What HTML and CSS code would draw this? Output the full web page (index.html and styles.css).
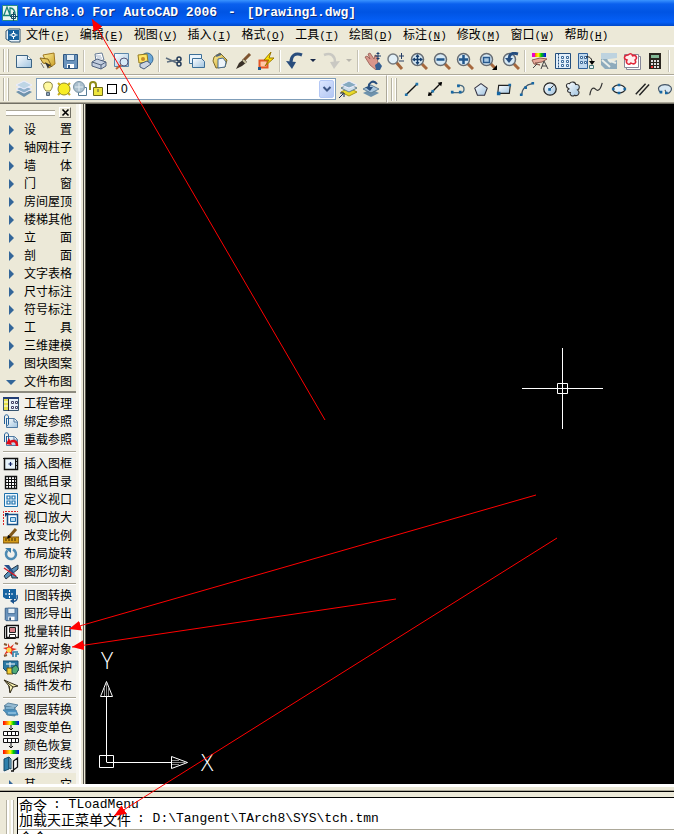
FILE: index.html
```html
<!DOCTYPE html>
<html lang="zh-CN">
<head>
<meta charset="utf-8">
<title>TArch8.0 For AutoCAD 2006 - [Drawing1.dwg]</title>
<link rel="stylesheet" href="styles.css">
</head>
<body>
<svg class="sprite" aria-hidden="true">
  <defs>
    <linearGradient id="paper" x1="0" y1="0" x2="1" y2="1"><stop offset="0" stop-color="#fff"/><stop offset="1" stop-color="#9fc3df"/></linearGradient>
    <linearGradient id="gold" x1="0" y1="0" x2="1" y2="1"><stop offset="0" stop-color="#fff3a0"/><stop offset="1" stop-color="#c89a20"/></linearGradient>
    <linearGradient id="rainbow"><stop offset="0" stop-color="#f00"/><stop offset=".25" stop-color="#f80"/><stop offset=".45" stop-color="#ff0"/><stop offset=".65" stop-color="#0c0"/><stop offset="1" stop-color="#00f"/></linearGradient>
  </defs>

  <symbol id="new" viewBox="0 0 18 18"><path d="M1.500 3.500h11l4 4v8h-15z" fill="url(#paper)" stroke="#3c6484"/><path d="M12.500 3.500v4h4" fill="#fff" stroke="#3c6484"/></symbol>
  <symbol id="open" viewBox="0 0 18 18"><path d="M5 3l11-2 1 11-6 4z" fill="url(#gold)" stroke="#a07820"/><path d="M2 6l8 1 3 6-8-2z" fill="#e8c860" stroke="#8a6818"/><path d="M7 10l3 7 1-3 4 1z" fill="#333"/><path d="M3 11l3 5" stroke="#777"/></symbol>
  <symbol id="save" viewBox="0 0 18 18"><path d="M2.500 2.500h14v14h-13l-1-1z" fill="#6b94bd" stroke="#2f5680"/><path d="M5.500 2.500h8v6h-8z" fill="#e4eef6" stroke="#456f98"/><path d="M6 12h7v4H6z" fill="#fff"/><path d="M7 13h2v3H7z" fill="#2f5680"/></symbol>
  <symbol id="print" viewBox="0 0 18 18"><path d="M5 2l7-1 2 7-8 1z" fill="#fff" stroke="#667b95"/><path d="M2 10l5-3 9 3v4l-5 3-9-3z" fill="#c3cede" stroke="#4f607d"/><path d="M2 10l9 3 5-3M11 13v4" fill="none" stroke="#4f607d"/><path d="M6 4h5M7 6h5" stroke="#a6b5c8"/></symbol>
  <symbol id="preview" viewBox="0 0 18 18"><path d="M1.500 1.500h14v13h-14z" fill="url(#paper)" stroke="#5b87aa"/><circle cx="11" cy="10" r="4" fill="#d6eaf6" stroke="#557"/><path d="M8 13l-5 4" stroke="#bd683c" stroke-width="2"/></symbol>
  <symbol id="publish" viewBox="0 0 18 18"><circle cx="11" cy="7" r="6" fill="#6ba7d8" stroke="#366b98"/><path d="M2 3l9-1 1 8-9 1z" fill="#ffe565" stroke="#947b20"/><path d="M4 12l7-3 4 3-7 5-4-2z" fill="#cbd4e2" stroke="#475c7b"/><circle cx="7" cy="7" r="2" fill="#c68c2b"/></symbol>
  <symbol id="cut" viewBox="0 0 18 18"><path d="M1 6l11 5M2 10l10-2" stroke="#607080" stroke-width="1.500"/><circle cx="14" cy="7" r="2" fill="none" stroke="#243b58" stroke-width="1.500"/><circle cx="14" cy="12" r="2" fill="none" stroke="#243b58" stroke-width="1.500"/></symbol>
  <symbol id="copy" viewBox="0 0 18 18"><path d="M1.500 2.500h12v9h-12z" fill="#eaf4fb" stroke="#3c6f98"/><path d="M4.500 6.500h9l3 3v6h-12z" fill="url(#paper)" stroke="#3c6f98"/></symbol>
  <symbol id="paste" viewBox="0 0 18 18"><path d="M3 5l6-4 7 7-2 7-9 1-3-7z" fill="url(#gold)" stroke="#7c6a28"/><path d="M7 7l5-1 3 4-1 5-7 1z" fill="#eef5fa" stroke="#496e90"/><path d="M5 4l5-2" stroke="#567" stroke-width="2"/></symbol>
  <symbol id="brush" viewBox="0 0 18 18"><path d="M16 2L9 9" stroke="#7e5430" stroke-width="3"/><path d="M10 7l3 3-5 4-6 3 3-6z" fill="#383027"/><path d="M9 8l3 3" stroke="#c9c3a0" stroke-width="2"/></symbol>
  <symbol id="block" viewBox="0 0 18 18"><path d="M2.500 8.500h8v7h-8z" fill="#ffc7a8" stroke="#e45626" stroke-width="2"/><path d="M14 0L7 8h5l-4 6 9-8h-5z" fill="#ffe400" stroke="#987500"/><path d="M1 15h3v3H1z" fill="#205a90"/></symbol>
  <symbol id="undo" viewBox="0 0 18 18"><path d="M16 3C9 0 5 4 5 10" fill="none" stroke="#294d7c" stroke-width="3"/><path d="M0 9l10 1-4 7z" fill="#294d7c"/></symbol>
  <symbol id="redo" viewBox="0 0 18 18"><path d="M2 3c7-3 11 1 11 7" fill="none" stroke="#c9c8c2" stroke-width="2.500"/><path d="M18 9l-10 1 4 7z" fill="#c9c8c2"/></symbol>
  <symbol id="pan" viewBox="0 0 18 18"><path d="M1 5l2-1 3 3-2-5 2-1 4 6 1-4 2 1 1 8 2 3-4 3-6-5z" fill="#d8968b" stroke="#95594e" stroke-width=".8"/><path d="M11 13l4-3 3 4-2 4h-4z" fill="#355f91"/><path d="M14 1v6M11 4h6" stroke="#1b3d6b"/><path d="M14 0l-2 2h4zM14 8l-2-2h4z" fill="#1b3d6b"/></symbol>
  <symbol id="lens" viewBox="0 0 18 18"><path d="M11 11l6 6" stroke="#a6683d" stroke-width="3"/><circle cx="7.500" cy="7.500" r="6" fill="#d6e9f5" stroke="#666c72" stroke-width="1.500"/></symbol>
  <symbol id="zoomrt" viewBox="0 0 18 18"><path d="M9 10l6 7" stroke="#a6683d" stroke-width="3"/><circle cx="6" cy="7" r="5" fill="#e2f0f8" stroke="#747b80" stroke-width="1.500"/><path d="M12 4h5M14.500 1v6M12 9h5" stroke="#243d65"/></symbol>
  <symbol id="zoomall" viewBox="0 0 18 18"><use href="#lens"/><path d="M7.500 3v9M3 7.500h9" stroke="#163e6c" stroke-width="1.500"/><path d="M5.500 5h4l-2-3zM5.500 10h4l-2 3zM5 5.500v4l-3-2zM10 5.500v4l3-2z" fill="#163e6c"/></symbol>
  <symbol id="zoomout" viewBox="0 0 18 18"><use href="#lens"/><path d="M3.500 7.500h8" stroke="#20568b" stroke-width="2.500"/></symbol>
  <symbol id="zoomin" viewBox="0 0 18 18"><use href="#lens"/><path d="M3 7.500h9M7.500 3v9" stroke="#20568b" stroke-width="2.500"/></symbol>
  <symbol id="zoomwin" viewBox="0 0 18 18"><use href="#lens"/><path d="M4.500 5.500h6v5h-6z" fill="#a9c9e3" stroke="#28598d" stroke-width="1.500"/><path d="M18 13v5h-5z"/></symbol>
  <symbol id="zoomprev" viewBox="0 0 18 18"><use href="#lens"/><path d="M16 2C9 0 7 3 7 7" fill="none" stroke="#254d7e" stroke-width="3"/><path d="M3 6h8l-4 5z" fill="#254d7e"/></symbol>
  <symbol id="props" viewBox="0 0 18 18"><path d="M1 1h14v4H1z" fill="url(#rainbow)"/><path d="M1 1h3v4H1z" fill="#e0c"/><path d="M1 8l8-2 7 1-5 3-7 1 5 2-6-1z" fill="#e7a99a" stroke="#8f5d50"/><path d="M2 16l4-4M13 9l-3 8M13 9l4 8M11 14h5" stroke="#444"/></symbol>
  <symbol id="center" viewBox="0 0 18 18"><path d="M1.500 1.500h15v15h-15z" fill="#e2effa" stroke="#244f7d"/><path d="M4.500 1.500v15" stroke="#244f7d" stroke-dasharray="2 1"/><path d="M7.500 4.500h2v2h-2zM12.500 4.500h2v2h-2zM7.500 8.500h2v2h-2zM12.500 8.500h2v2h-2zM7.500 12.500h2v2h-2zM12.500 12.500h2v2h-2z" fill="#fff" stroke="#3c6c9c"/></symbol>
  <symbol id="palette" viewBox="0 0 18 18"><path d="M1.500 1.500h9v15h-9z" fill="#bed8ee" stroke="#2f619a"/><path d="M3.500 4.500h2v2h-2zM3.500 9.500h2v2h-2zM7.500 4.500h2v2h-2zM7.500 9.500h2v2h-2z" fill="#fff" stroke="#3d6a99"/><path d="M9 5c4-1 6 2 6 5" stroke="#111" fill="none"/><path d="M12 9h6l-3 4z"/><path d="M12.500 13.500h4v3h-4z" fill="#e8f1f7" stroke="#477"/></symbol>
  <symbol id="sheet" viewBox="0 0 18 18"><path d="M1 1h16v5L1 8z" fill="#bed3df"/><path d="M1 7h6l3 4 7-3v9H5L1 13z" fill="#8eabbc"/><path d="M2 8l8 7M8 8l8 3" stroke="#e9eee9" stroke-width="2"/></symbol>
  <symbol id="markup" viewBox="0 0 18 18"><path d="M3.500 4.500h14v13h-14z" fill="#fff" stroke="#889"/><path d="M1.500 2.500h14v13h-14z" fill="#fff" stroke="#889"/><path d="M5 3c3-3 5 0 4 1 4-2 6 2 3 4 2 3-1 5-4 3-2 3-6 0-4-3-4-1-3-5 1-5z" fill="#fee" stroke="#e02639" stroke-width="1.500"/></symbol>
  <symbol id="calc" viewBox="0 0 18 18"><path d="M3 1h12v16H3z" fill="#2a251f"/><path d="M5 3h8v3H5z" fill="#83b895"/><path d="M5 8h2v2H5zM8 8h2v2H8zM11 8h2v2h-2zM5 11h2v2H5zM8 11h2v2H8zM11 11h2v2h-2zM8 14h2v2H8zM11 14h2v2h-2z" fill="#ddd"/><path d="M5 14h2v2H5z" fill="#e33"/></symbol>

  <symbol id="layers" viewBox="0 0 18 18"><path d="M1 12l8-4 8 4-8 5z" fill="#6e92ac"/><path d="M1 9l8-4 8 4-8 4z" fill="#8dafca" stroke="#eef"/><path d="M1 5l8-4 8 4-8 4z" fill="#bed5e5" stroke="#eef"/></symbol>
  <symbol id="layercur" viewBox="0 0 18 18"><path d="M2 12l8-4 8 4-8 4z" fill="#e8d928" stroke="#a79516"/><path d="M2 8l8-4 8 4-8 4z" fill="#d0dfea" stroke="#617f91"/><path d="M2 5l8-4 8 4-8 3z" fill="#86aac0" stroke="#eef"/><path d="M0 18l4-4M1 13h4v4" fill="none" stroke="#125"/></symbol>
  <symbol id="layerprev" viewBox="0 0 18 18"><path d="M1 13l8-4 8 4-8 4z" fill="#6e92ac"/><path d="M1 9l8-4 8 4-8 4z" fill="#a8c5dc" stroke="#5f8098"/><path d="M15 4c-4-5-9-1-8 4" fill="none" stroke="#274e7d" stroke-width="2"/><path d="M3 7h8l-3 4z" fill="#274e7d"/></symbol>
  <symbol id="bulb" viewBox="0 0 16 16"><path d="M8 1c6 0 5 6 2 9H6C3 7 2 1 8 1z" fill="#fff9a0" stroke="#8a8340"/><path d="M6.500 11.500h3v3h-3z" fill="#8fa6bd" stroke="#567"/></symbol>
  <symbol id="sun" viewBox="0 0 16 16"><path d="M2 2l12 12M14 2L2 14" stroke="#c8ae18" stroke-width="2"/><circle cx="8" cy="8" r="6" fill="#f8ed26" stroke="#948b28"/></symbol>
  <symbol id="freeze" viewBox="0 0 16 16"><path d="M6.500 6.500h8v8h-8z" fill="#fff" stroke="#567b94"/><circle cx="7" cy="6" r="5.500" fill="#abc0ce" stroke="#7b95a6"/><path d="M3 6h8M7 2v8" stroke="#e2edf2"/></symbol>
  <symbol id="lock" viewBox="0 0 16 16"><path d="M2 9V4c0-4 6-4 6 0v3" fill="none" stroke="#8f8c18" stroke-width="2"/><path d="M5.500 6.500h9v8h-9z" fill="#eee53c" stroke="#706d1d"/><path d="M10 8v3" stroke="#554"/></symbol>

  <symbol id="line" viewBox="0 0 18 18"><path d="M3 15L15 3" stroke="#111" stroke-width="1.500"/><path d="M1 14h3v3H1zM13 2h3v3h-3z" fill="#1f75ae"/></symbol>
  <symbol id="xline" viewBox="0 0 18 18"><path d="M2 16L16 2" stroke="#111" stroke-width="1.500"/><path d="M1 17l1-5 4 4zM17 1l-1 5-4-4z"/><path d="M5 10h3v3H5z" fill="#1f75ae"/></symbol>
  <symbol id="pline" viewBox="0 0 18 18"><path d="M2 13h10c5 0 5-7 0-8H8" fill="none" stroke="#4a6c83" stroke-width="1.500"/><path d="M1 11h3v3H1zM10 11h3v3h-3zM8 4h3v3H8z" fill="#1767a3"/></symbol>
  <symbol id="polygon" viewBox="0 0 18 18"><path d="M9 3l7 5-3 8H5L2 8z" fill="url(#paper)" stroke="#334" stroke-width="1.200"/></symbol>
  <symbol id="rect" viewBox="0 0 18 18"><path d="M3 5h13l-1 9H2z" fill="url(#paper)" stroke="#222" stroke-width="1.300"/><path d="M1 12h4v4H1zM14 3h3v3h-3z" fill="#1767a3"/></symbol>
  <symbol id="arc" viewBox="0 0 18 18"><path d="M3 16C3 9 8 4 15 3" fill="none" stroke="#456" stroke-width="1.300"/><path d="M1 14h3v3H1zM6 6h3v3H6zM14 1h3v3h-3z" fill="#1767a3"/></symbol>
  <symbol id="circle" viewBox="0 0 18 18"><circle cx="9" cy="9" r="7" fill="url(#paper)" stroke="#222" stroke-width="1.400"/><path d="M9 9l4-4" stroke="#222"/><path d="M7 8h3v3H7z" fill="#1767a3"/></symbol>
  <symbol id="cloud" viewBox="0 0 18 18"><path d="M5 3c2-3 7-2 7 1 5-1 5 5 2 6 4 3 0 8-3 6-3 2-6 0-5-3-4 0-4-4-1-4-5-2-4-7 0-6z" fill="url(#paper)" stroke="#333" stroke-width="1.200"/></symbol>
  <symbol id="spline" viewBox="0 0 18 18"><path d="M2 16C3 10 4 8 6 8c3 0 3 4 6 2 2-1 3-4 4-8" fill="none" stroke="#333" stroke-width="1.300"/></symbol>
  <symbol id="ellipse" viewBox="0 0 18 18"><ellipse cx="9" cy="9" rx="7" ry="4.500" fill="#e8f2f8" stroke="#222" stroke-width="1.300"/><path d="M1 7.500h3v3H1zM14 7.500h3v3h-3zM7.500 3h3v3h-3zM7.500 12h3v3h-3z" fill="#1767a3"/></symbol>
  <symbol id="mline" viewBox="0 0 18 18"><path d="M2 15L13 3M6 16L17 4" stroke="#222" stroke-width="1.600"/></symbol>
  <symbol id="earc" viewBox="0 0 18 18"><path d="M4 13C-1 8 3 4 9 4s9 4 6 8-5 1-6-2" fill="#d8e8f3" stroke="#456" stroke-width="1.300"/><path d="M3 11h3v3H3zM9 12h3v3H9z" fill="#1767a3"/></symbol>

  <symbol id="dwg" viewBox="0 0 16 16"><path d="M4 1h11v13H6L1 11V3z" fill="#e9f3fa" stroke="#34556f"/><path d="M3 2h11v10H3z" fill="#17629f"/><path d="M8.500 3v8M4.500 7h8" stroke="#fff"/><path d="M7 5.500h3v3H7z" fill="#17629f" stroke="#fff"/></symbol>
  <symbol id="project" viewBox="0 0 16 16"><path d="M.500 2.500h15v12H.500z" fill="#eaf2f8" stroke="#35536f"/><path d="M0 1h16v2H0z" fill="#223d75"/><path d="M1 3h4v11H1z" fill="#e4df4a"/><path d="M5.500 3v12" stroke="#223"/><path d="M1 6h4M1 10h4" stroke="#fff"/><path d="M8.500 5.500h2v2h-2zM12.500 5.500h2v2h-2zM8.500 10.500h2v2h-2zM12.500 10.500h2v2h-2z" fill="#fff" stroke="#446"/></symbol>
  <symbol id="xref" viewBox="0 0 16 16"><path d="M3.500 4.500h8l3 3v6h-11z" fill="url(#paper)" stroke="#4f79a1"/><path d="M11 5v3h3" fill="#fff" stroke="#4f79a1"/><path d="M1.500 10V3c0-3 4-3 4 0v7c0 2-2 2-2 0V4" fill="none" stroke="#235f99"/></symbol>
  <symbol id="xreload" viewBox="0 0 16 16"><use href="#xref"/><path d="M14 14c0-5-3-6-7-4" fill="none" stroke="#e00b18" stroke-width="2.500"/><path d="M3 12l3-6 3 7z" fill="#e00b18"/></symbol>
  <symbol id="frame" viewBox="0 0 16 16"><path d="M1.500 2.500h13v11h-13z" fill="#e8f4fb" stroke="#111" stroke-width="1.500"/><path d="M12.500 2.500v11M0 2.500h3M12 5.500h3M12 9.500h3" stroke="#111"/><path d="M7.500 6v4M5.500 8h4" stroke="#126" stroke-width="1.200"/></symbol>
  <symbol id="grid" viewBox="0 0 16 16"><path d="M2.500 2.500h11v12h-11z" fill="#fff" stroke="#111" stroke-width="1.400"/><path d="M2 5.500h12M2 8.500h12M2 11.500h12M5.500 2v13M8.500 2v13M11.500 2v13" stroke="#111"/></symbol>
  <symbol id="views" viewBox="0 0 16 16"><path d="M1.500 1.500h13v13h-13z" fill="#eef8ff" stroke="#1e71ac"/><path d="M4 4h3v3H4zM9 4h3v3H9zM4 9h3v3H4zM9 9h3v3H9z" fill="#fff" stroke="#1e71ac" stroke-width="1.200"/></symbol>
  <symbol id="vpzoom" viewBox="0 0 16 16"><path d="M.500 15V1.500H15" fill="none" stroke="#d22" stroke-dasharray="2 1"/><path d="M4.500 4.500h10v10h-10z" fill="#fff" stroke="#164f86" stroke-width="1.500"/><path d="M7.500 7.500h5v4h-5z" fill="#b9daf1" stroke="#2474ae"/><path d="M2 3h4L2 7z" fill="#15356c"/></symbol>
  <symbol id="scale" viewBox="0 0 16 16"><path d="M0 9h16v6H0z" fill="#d39a18" stroke="#704b0e"/><path d="M3 10v3M6 10v3M9 10v3M12 10v3" stroke="#402800"/><path d="M13 1L6 9" stroke="#805719" stroke-width="3"/><path d="M5 7l-1 4 4-2z"/></symbol>
  <symbol id="rotate" viewBox="0 0 16 16"><path d="M4.500 4.500A5 5 0 1 0 10 3.500" fill="none" stroke="#4d8ab3" stroke-width="2.500"/><path d="M2 2h6v5z" fill="#397aa7"/></symbol>
  <symbol id="slice" viewBox="0 0 16 16"><path d="M7 6l8-5v4L3 15l-2-3z" fill="#5991b8" stroke="#234"/><path d="M8 9l7 5H9z" fill="#5991b8" stroke="#234"/><path d="M1 1h5l6 9-3-1z" fill="#26518b"/><path d="M1 4l12 8" stroke="#d31c2b" stroke-width="1.500"/></symbol>
  <symbol id="convert" viewBox="0 0 16 16"><path d="M0 1h13v10H3L0 9z" fill="#17629f"/><path d="M6.500 2v8M2 6h9" stroke="#fff" stroke-dasharray="2 1"/><path d="M14 7c1 4-1 7-4 6" stroke="#17508b" fill="none" stroke-width="1.500"/><path d="M7 13l4-3v6z" fill="#17508b"/></symbol>
  <symbol id="batch" viewBox="0 0 16 16"><path d="M1.500 2.500h11v12h-11z" fill="#fff" stroke="#111"/><path d="M3.500 1.500h12v12h-12z" fill="#fff" stroke="#111" stroke-width="1.500"/><path d="M6.500 3.500h6v5h-6z" fill="#fff" stroke="#222"/><path d="M7 5h5M7 7h5" stroke="#a01"/><path d="M6.500 10.500h6v3h-6z" fill="#fff" stroke="#222"/></symbol>
  <symbol id="explode" viewBox="0 0 16 16"><path d="M5 1l2 4 4-3-2 4 5 1-5 2 1 5-4-4-5 3 3-5-4-2 5-1z" fill="#e5311f"/><circle cx="6" cy="8" r="2.500" fill="#ffd54a"/><path d="M1 2l3 1M12 1l3 1M1 14l3-1" stroke="#865833" stroke-width="2"/><path d="M10 15v-5h5M13 15v-3h3" fill="none" stroke="#267da9" stroke-width="1.500"/></symbol>
  <symbol id="protect" viewBox="0 0 16 16"><path d="M0 1h15v10H3L0 8z" fill="#2a79a4" stroke="#174e72"/><path d="M3 4h9M7 2v7" stroke="#fff"/><path d="M4 8h6v6H4z" fill="#f2cf32" stroke="#69510e"/><path d="M9 8l4-3 3 4-3 5-4-1z" fill="#50ac77" stroke="#194f4d"/></symbol>
  <symbol id="plane" viewBox="0 0 16 16"><path d="M1 2l14 6-5 1-3 6-1-7z" fill="#f6f0ae" stroke="#332d1c"/><path d="M1 2l9 7M6 8l1 6" stroke="#332d1c"/></symbol>
  <symbol id="stack" viewBox="0 0 16 16"><path d="M1 4l4-3 10 2-3 3z" fill="#94bad2" stroke="#5f87a2"/><path d="M2 4l10 2v8l-8-1-2-4z" fill="#4887b0" stroke="#5f87a2"/><path d="M0 8h13l2 5H6z" fill="#4d94c4" stroke="#4f86ab"/><path d="M3 6h8M5 11h8" stroke="#b7daee"/></symbol>
  <symbol id="mono" viewBox="0 0 16 16"><path d="M0 1h16v4H0z" fill="url(#rainbow)"/><path d="M8 5v5M6 8l2 2 2-2" fill="none" stroke="#111"/><path d="M.500 11.500h15v4H.500zM4.500 11v5M8.500 11v5M12.500 11v5" fill="#fff" stroke="#111"/></symbol>
  <symbol id="restore" viewBox="0 0 16 16"><path d="M.500 .500h15v4H.500zM4.500 0v5M8.500 0v5M12.500 0v5" fill="#fff" stroke="#111"/><path d="M8 5v5M6 8l2 2 2-2" fill="none" stroke="#111"/><path d="M0 12h16v4H0z" fill="url(#rainbow)"/></symbol>
  <symbol id="morph" viewBox="0 0 16 16"><path d="M1 3l5-2v12l-5 2z" fill="#2f80ac" stroke="#174966"/><path d="M6 1l2 2v10l-2-1z" fill="#96c3db" stroke="#174966"/><path d="M10.500 14V5l4-3v9zM8 15h3" fill="#fff" stroke="#111" stroke-width="1.300"/></symbol>
</svg>

<div class="app">
  <header class="title-bar">
    <svg class="title-icon" viewBox="0 0 16 16" aria-hidden="true"><path d="M.500 .500h15v15H.500z" fill="#e9f5ee" stroke="#2a8d83"/><path d="M2 10L5 2l3 8V3c4 0 5 3 5 7M1 10.500h9" fill="none" stroke="#188276" stroke-width="1.300"/><path d="M9.500 9.500h4v4h-4zM11.500 7v9M8 11.500h8" fill="none" stroke="#174d64"/></svg>
    <h1 class="title-text"><span>TArch8.0 For AutoCAD 2006</span><span>-</span><span>[Drawing1.dwg]</span></h1>
  </header>

  <nav class="menu-bar" aria-label="主菜单">
    <svg class="icon-16" aria-hidden="true"><use href="#dwg"/></svg>
    <button class="menu">文件<span class="key">(<u>F</u>)</span></button>
    <button class="menu">编辑<span class="key">(<u>E</u>)</span></button>
    <button class="menu">视图<span class="key">(<u>V</u>)</span></button>
    <button class="menu">插入<span class="key">(<u>I</u>)</span></button>
    <button class="menu">格式<span class="key">(<u>O</u>)</span></button>
    <button class="menu">工具<span class="key">(<u>T</u>)</span></button>
    <button class="menu">绘图<span class="key">(<u>D</u>)</span></button>
    <button class="menu">标注<span class="key">(<u>N</u>)</span></button>
    <button class="menu">修改<span class="key">(<u>M</u>)</span></button>
    <button class="menu">窗口<span class="key">(<u>W</u>)</span></button>
    <button class="menu">帮助<span class="key">(<u>H</u>)</span></button>
  </nav>

  <div class="toolbar" role="toolbar" aria-label="标准">
    <span class="grip"></span>
    <button class="tool" aria-label="新建"><svg><use href="#new"/></svg></button>
    <button class="tool" aria-label="打开"><svg><use href="#open"/></svg></button>
    <button class="tool" aria-label="保存"><svg><use href="#save"/></svg></button>
    <span class="sep"></span>
    <button class="tool" aria-label="打印"><svg><use href="#print"/></svg></button>
    <button class="tool" aria-label="打印预览"><svg><use href="#preview"/></svg></button>
    <button class="tool" aria-label="发布"><svg><use href="#publish"/></svg></button>
    <span class="sep"></span>
    <button class="tool" aria-label="剪切"><svg><use href="#cut"/></svg></button>
    <button class="tool" aria-label="复制"><svg><use href="#copy"/></svg></button>
    <button class="tool" aria-label="粘贴"><svg><use href="#paste"/></svg></button>
    <button class="tool" aria-label="特性匹配"><svg><use href="#brush"/></svg></button>
    <button class="tool" aria-label="块编辑器"><svg><use href="#block"/></svg></button>
    <span class="sep"></span>
    <button class="tool" aria-label="放弃"><svg><use href="#undo"/></svg></button>
    <button class="drop" aria-label="放弃列表"></button>
    <button class="tool" aria-label="重做" disabled><svg><use href="#redo"/></svg></button>
    <button class="drop" aria-label="重做列表" disabled></button>
    <span class="sep"></span>
    <button class="tool" aria-label="实时平移"><svg><use href="#pan"/></svg></button>
    <button class="tool" aria-label="实时缩放"><svg><use href="#zoomrt"/></svg></button>
    <button class="tool" aria-label="全部缩放"><svg><use href="#zoomall"/></svg></button>
    <button class="tool" aria-label="缩小"><svg><use href="#zoomout"/></svg></button>
    <button class="tool" aria-label="放大"><svg><use href="#zoomin"/></svg></button>
    <button class="tool" aria-label="窗口缩放"><svg><use href="#zoomwin"/></svg></button>
    <button class="tool" aria-label="缩放上一个"><svg><use href="#zoomprev"/></svg></button>
    <span class="sep"></span>
    <button class="tool" aria-label="特性"><svg><use href="#props"/></svg></button>
    <button class="tool" aria-label="设计中心"><svg><use href="#center"/></svg></button>
    <button class="tool" aria-label="工具选项板"><svg><use href="#palette"/></svg></button>
    <button class="tool" aria-label="图纸集"><svg><use href="#sheet"/></svg></button>
    <button class="tool" aria-label="标记集"><svg><use href="#markup"/></svg></button>
    <button class="tool" aria-label="计算器"><svg><use href="#calc"/></svg></button>
    <span class="sep"></span>
  </div>

  <div class="toolbar-row">
    <div class="toolbar layer-bar" role="toolbar" aria-label="图层">
      <span class="grip"></span>
      <button class="tool" aria-label="图层特性"><svg><use href="#layers"/></svg></button>
      <div class="combo">
        <select aria-label="当前图层"><option>0</option></select>
        <div class="layer-state" aria-hidden="true">
          <svg><use href="#bulb"/></svg><svg><use href="#sun"/></svg><svg><use href="#freeze"/></svg><svg><use href="#lock"/></svg><span class="swatch"></span>
        </div>
        <span class="combo-arrow" aria-hidden="true"><svg viewBox="0 0 10 10"><path d="M1.500 3L5 6.500 8.500 3" fill="none" stroke="#3d5685" stroke-width="2"/></svg></span>
      </div>
      <button class="tool" aria-label="置为当前"><svg><use href="#layercur"/></svg></button>
      <button class="tool" aria-label="上一个图层"><svg><use href="#layerprev"/></svg></button>
    </div>
    <div class="toolbar draw-bar" role="toolbar" aria-label="绘图">
      <span class="grip"></span>
      <button class="tool" aria-label="直线"><svg><use href="#line"/></svg></button>
      <button class="tool" aria-label="构造线"><svg><use href="#xline"/></svg></button>
      <button class="tool" aria-label="多段线"><svg><use href="#pline"/></svg></button>
      <button class="tool" aria-label="正多边形"><svg><use href="#polygon"/></svg></button>
      <button class="tool" aria-label="矩形"><svg><use href="#rect"/></svg></button>
      <button class="tool" aria-label="圆弧"><svg><use href="#arc"/></svg></button>
      <button class="tool" aria-label="圆"><svg><use href="#circle"/></svg></button>
      <button class="tool" aria-label="修订云线"><svg><use href="#cloud"/></svg></button>
      <button class="tool" aria-label="样条曲线"><svg><use href="#spline"/></svg></button>
      <button class="tool" aria-label="椭圆"><svg><use href="#ellipse"/></svg></button>
      <button class="tool" aria-label="多线"><svg><use href="#mline"/></svg></button>
      <button class="tool" aria-label="椭圆弧"><svg><use href="#earc"/></svg></button>
    </div>
  </div>

  <div class="workspace">
    <aside class="side">
      <div class="side-head"><span class="side-grip"></span><button class="close" aria-label="关闭"><svg viewBox="0 0 9 9"><path d="M1.500 1.500l6 6M7.500 1.500l-6 6" stroke="#000" stroke-width="1.600"/></svg></button></div>
      <button class="row"><i class="tri"></i>设&#12288;&#12288;置</button>
      <button class="row"><i class="tri"></i>轴网柱子</button>
      <button class="row"><i class="tri"></i>墙&#12288;&#12288;体</button>
      <button class="row"><i class="tri"></i>门&#12288;&#12288;窗</button>
      <button class="row"><i class="tri"></i>房间屋顶</button>
      <button class="row"><i class="tri"></i>楼梯其他</button>
      <button class="row"><i class="tri"></i>立&#12288;&#12288;面</button>
      <button class="row"><i class="tri"></i>剖&#12288;&#12288;面</button>
      <button class="row"><i class="tri"></i>文字表格</button>
      <button class="row"><i class="tri"></i>尺寸标注</button>
      <button class="row"><i class="tri"></i>符号标注</button>
      <button class="row"><i class="tri"></i>工&#12288;&#12288;具</button>
      <button class="row"><i class="tri"></i>三维建模</button>
      <button class="row"><i class="tri"></i>图块图案</button>
      <button class="row"><i class="tri open"></i>文件布图</button>
      <div class="submenu">
        <div class="group">
          <button class="row"><svg><use href="#project"/></svg>工程管理</button>
          <button class="row"><svg><use href="#xref"/></svg>绑定参照</button>
          <button class="row"><svg><use href="#xreload"/></svg>重载参照</button>
        </div>
        <div class="group">
          <button class="row"><svg><use href="#frame"/></svg>插入图框</button>
          <button class="row"><svg><use href="#grid"/></svg>图纸目录</button>
          <button class="row"><svg><use href="#views"/></svg>定义视口</button>
          <button class="row"><svg><use href="#vpzoom"/></svg>视口放大</button>
          <button class="row"><svg><use href="#scale"/></svg>改变比例</button>
          <button class="row"><svg><use href="#rotate"/></svg>布局旋转</button>
          <button class="row"><svg><use href="#slice"/></svg>图形切割</button>
        </div>
        <div class="group">
          <button class="row"><svg><use href="#convert"/></svg>旧图转换</button>
          <button class="row"><svg><use href="#save"/></svg>图形导出</button>
          <button class="row"><svg><use href="#batch"/></svg>批量转旧</button>
          <button class="row"><svg><use href="#explode"/></svg>分解对象</button>
          <button class="row"><svg><use href="#protect"/></svg>图纸保护</button>
          <button class="row"><svg><use href="#plane"/></svg>插件发布</button>
        </div>
        <div class="group">
          <button class="row"><svg><use href="#stack"/></svg>图层转换</button>
          <button class="row"><svg><use href="#mono"/></svg>图变单色</button>
          <button class="row"><svg><use href="#restore"/></svg>颜色恢复</button>
          <button class="row"><svg><use href="#morph"/></svg>图形变线</button>
        </div>
      </div>
      <button class="row"><i class="tri"></i>其&#12288;&#12288;它</button>
    </aside>
    <main class="canvas">
      <svg class="crosshair" viewBox="0 0 81 81" aria-hidden="true"><path d="M40.500 0v81M0 40.500h81M35.500 35.500h10v10h-10z"/></svg>
      <svg class="ucs" viewBox="0 0 130 136" role="img" aria-label="UCS">
        <path d="M13.500 107.500h14v12h-14zM20.500 114V49M20.500 114.500H85M20.500 33.500l-6 15h12zM101.500 114.500l-16-6v12z"/>
        <path class="shade" d="M20.500 35v13M18.500 40v8M22.500 40v8M99 114.500H86M93 112.500h-7M93 116.500h-7"/>
        <text x="15" y="21">Y</text><text x="115" y="123">X</text>
      </svg>
    </main>
  </div>

  <footer class="command">
    <div class="command-grip"></div>
    <div class="command-body">
      <p class="log"><span>命令</span><code>: TLoadMenu</code></p>
      <p class="log"><span>加载天正菜单文件</span><code>: D:\Tangent\TArch8\SYS\tch.tmn</code></p>
      <label class="prompt">命令:<input type="text" aria-label="命令"></label>
    </div>
  </footer>
</div>

<svg class="callouts" aria-hidden="true">
  <defs><marker id="head" viewBox="0 0 12 10" refX="12" refY="5" markerWidth="12" markerHeight="10" markerUnits="userSpaceOnUse" orient="auto"><path d="M0 0l12 5-12 5z" fill="#f00"/></marker></defs>
  <line x1="325" y1="420" x2="92" y2="19"/>
  <line x1="536" y1="495" x2="69" y2="629"/>
  <line x1="396" y1="599" x2="72" y2="647"/>
  <line x1="557" y1="538" x2="114" y2="816"/>
</svg>
</body>
</html>
```

FILE: styles.css
```css
* { box-sizing: border-box; }

body {
  margin: 0;
  background: #ece9d8;
  color: #000;
  font: 12px/18px "Liberation Sans", "Noto Sans CJK SC", sans-serif;
}

button {
  margin: 0;
  padding: 0;
  border: 0;
  background: none;
  color: inherit;
  font: inherit;
}

svg { display: block; flex: none; }
.sprite { position: absolute; width: 0; height: 0; }

.app {
  display: flex;
  flex-direction: column;
  height: 100vh;
  overflow: hidden;
}

/* Title and menus */
.title-bar {
  display: flex;
  flex: none;
  align-items: center;
  gap: 4px;
  height: 26px;
  padding-left: 2px;
  background: linear-gradient(#3a94ff 0, #0a60ee 4px, #0054e3 12px, #0560f8 22px, #0048c8 26px);
}
.title-icon { width: 16px; height: 16px; }
.title-text {
  display: flex;
  gap: 11px;
  margin: 0;
  color: #fff;
  font: bold 13px/18px "Liberation Mono", monospace;
  text-shadow: 1px 1px #0a2e80;
  white-space: pre;
}

.menu-bar {
  display: flex;
  flex: none;
  align-items: center;
  height: 20px;
  padding-left: 5px;
  border-bottom: 1px solid #fff;
}
.icon-16 { width: 16px; height: 16px; }
.menu {
  display: flex;
  align-items: baseline;
  padding: 0 5px;
  white-space: nowrap;
}
.key { font: 11px/18px "Liberation Mono", monospace; }

/* Toolbars */
.toolbar {
  display: flex;
  flex: none;
  align-items: center;
  height: 29px;
  border-top: 1px solid #fff;
  border-bottom: 1px solid #aca899;
  overflow: hidden;
}
.toolbar-row { display: flex; flex: none; border-bottom: 1px solid #716f64; }
.toolbar-row .toolbar { height: 28px; }
.layer-bar { width: 387px; padding-right: 4px; border-right: 1px solid #aca899; }
.draw-bar { flex: 1; border-left: 1px solid #fff; }

.grip {
  flex: none;
  width: 6px;
  height: 23px;
  margin: 0 3px;
  border: solid #b5b2a3;
  border-width: 0 1px;
  background: linear-gradient(90deg, #fff 0 1px, #ece9d8 1px 3px, #fff 3px 4px);
}
.tool {
  display: flex;
  flex: none;
  align-items: center;
  justify-content: center;
  width: 23px;
  height: 22px;
}
.tool svg { width: 18px; height: 18px; }
.draw-bar .tool svg { width: 16px; height: 16px; }
.sep {
  flex: none;
  width: 2px;
  height: 22px;
  margin: 0 2px;
  border-left: 1px solid #c5c2b4;
  border-right: 1px solid #fff;
}
.drop { display: flex; flex: none; justify-content: center; width: 13px; }
.drop::before { content: ""; border: 3px solid transparent; border-top-color: #182848; border-bottom: 0; }
.drop:disabled::before { border-top-color: #b8b6ad; }

.combo { position: relative; flex: 1; height: 22px; margin-left: 1px; }
.combo select {
  width: 100%;
  height: 22px;
  padding: 0 20px 0 84px;
  border: 1px solid #7f9db9;
  border-radius: 0;
  background: #fff;
  color: #000;
  font: 12px/20px "Liberation Sans", sans-serif;
  appearance: none;
}
.layer-state {
  position: absolute;
  top: 3px;
  left: 4px;
  display: flex;
  align-items: center;
  pointer-events: none;
}
.layer-state svg { width: 16px; height: 16px; }
.swatch { width: 10px; height: 10px; margin-left: 3px; border: 1px solid #000; }
.combo-arrow {
  position: absolute;
  top: 2px;
  right: 2px;
  display: grid;
  place-items: center;
  width: 15px;
  height: 18px;
  border: 1px solid #b4c8f5;
  border-radius: 2px;
  background: linear-gradient(135deg, #dce6ff, #b3c7f3);
  pointer-events: none;
}
.combo-arrow svg { width: 10px; height: 10px; }

/* Work area */
.workspace { display: flex; flex: 1; min-height: 0; }
.side {
  flex: none;
  width: 86px;
  padding-right: 7px;
  border-right: 3px double #55534b;
  background: linear-gradient(90deg, #ece9d8 76px, #f6f5ee 76px 79px, #fff 79px 81px, #ece9d8 81px);
  overflow: hidden;
}
.side-head {
  display: flex;
  align-items: center;
  gap: 4px;
  height: 17px;
  padding-left: 6px;
}
.side-grip {
  width: 49px;
  height: 6px;
  border: solid #aca899;
  border-width: 1px 0;
  background: #fff;
}
.close {
  display: grid;
  place-items: center;
  width: 12px;
  height: 11px;
  border: 1px solid;
  border-color: #fff #716f64 #716f64 #fff;
}
.close svg { width: 9px; height: 9px; }

.row {
  display: flex;
  align-items: center;
  gap: 5px;
  height: 18px;
  padding-left: 3px;
  white-space: nowrap;
}
.row svg { width: 16px; height: 16px; }
.tri { display: flex; flex: none; justify-content: center; width: 16px; }
.tri::before {
  content: "";
  border: solid transparent;
  border-width: 5px 0 5px 5px;
  border-left-color: #336699;
}
.tri.open::before {
  border-width: 5px 5px 0;
  border-color: #336699 transparent transparent;
}

.submenu {
  margin-bottom: 3px;
  padding-top: 2px;
  border-top: 2px solid #8d8b80;
  background: #f1f0eb;
}
.group + .group::before {
  content: "";
  display: block;
  margin: 2px 0 2px 3px;
  border-top: 1px solid #aca899;
  border-bottom: 1px solid #fff;
}
.group { display: flow-root; }

.canvas {
  position: relative;
  flex: 1;
  min-width: 0;
  background: #000;
  overflow: hidden;
}
.crosshair {
  position: absolute;
  top: 244px;
  left: 436px;
  width: 81px;
  height: 81px;
  fill: none;
  stroke: #fff;
}
.ucs {
  position: absolute;
  bottom: 0;
  left: 0;
  width: 130px;
  height: 136px;
  fill: none;
  stroke: #fff;
}
.ucs .shade { stroke: #888; }
.ucs text {
  fill: #fff;
  stroke: none;
  font: 300 23px "Open Sans", sans-serif;
}

/* Command line */
.command {
  display: flex;
  flex: none;
  height: 50px;
  border-top: 3px solid #fff;
  background: linear-gradient(#ece9d8 3px, #aca899 3px 4px, #000 4px 5px, #ece9d8 5px);
  overflow: hidden;
}
.command-grip {
  width: 8px;
  margin: 13px 3px 0 6px;
  border: solid #b5b2a3;
  border-width: 0 1px;
  background: linear-gradient(90deg, #fff 0 2px, #ece9d8 2px 4px, #fff 4px);
}
.command-body {
  flex: 1;
  min-width: 0;
  height: 50px;
  margin-top: 10px;
  border: solid #000;
  border-width: 1px 0 0 1px;
  background: #fff;
}
.log {
  display: flex;
  gap: 6px;
  height: 14px;
  margin: 0;
  padding-left: 1px;
  font: 14px/14px "Noto Sans CJK SC", sans-serif;
  white-space: nowrap;
}
.log code { font: 13px/14px "Liberation Mono", monospace; }
.prompt {
  display: flex;
  margin-top: 3px;
  padding-left: 1px;
  border-top: 1px solid #aca899;
  font: 14px/14px "Noto Sans CJK SC", sans-serif;
}
.prompt input { flex: 1; min-width: 0; border: 0; }

/* Callout arrows drawn over the window */
.callouts {
  position: absolute;
  top: 0;
  left: 0;
  width: 100%;
  height: 100vh;
  pointer-events: none;
}
.callouts line {
  stroke: #f00;
  marker-end: url(#head);
}
```
